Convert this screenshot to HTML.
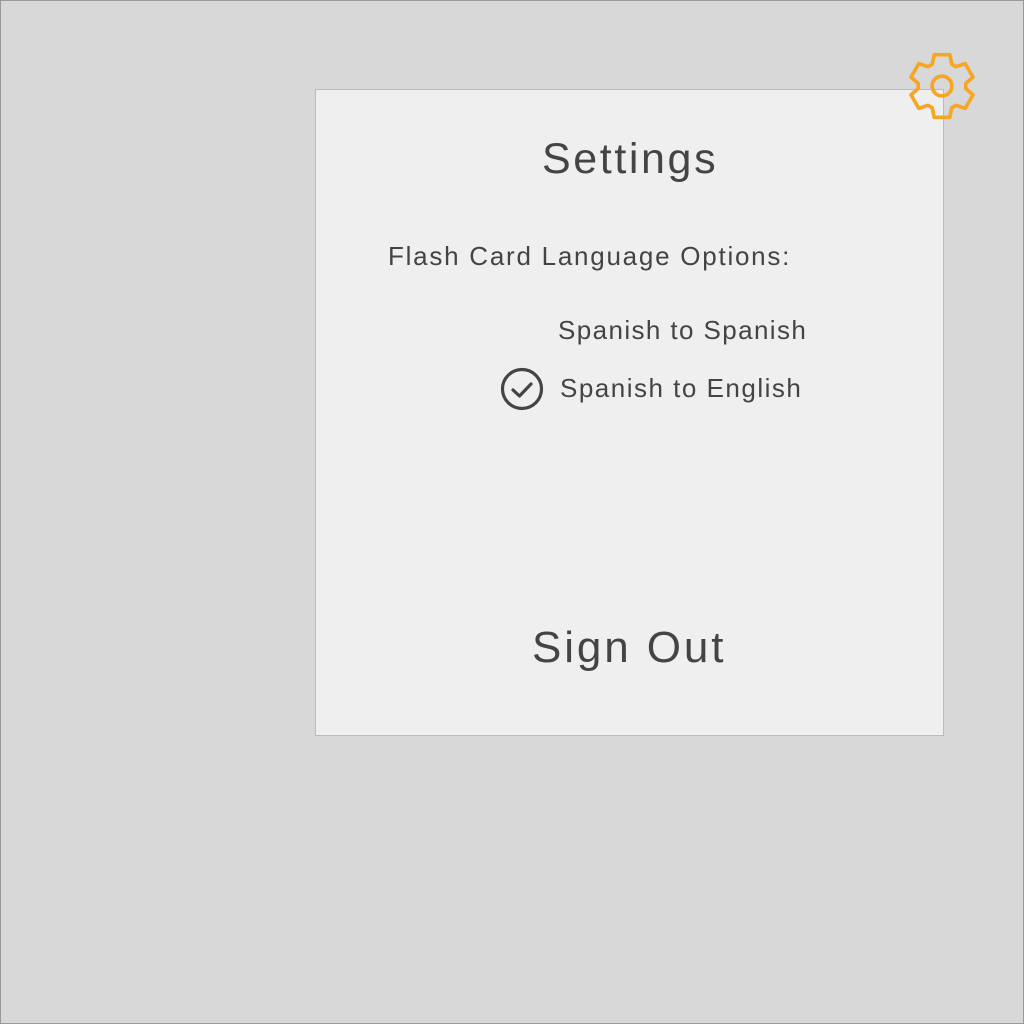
<!DOCTYPE html>
<html><head><style>
body{margin:0;width:1024px;height:1024px;background:#d8d8d8;font-family:"Liberation Sans",sans-serif;color:#444;position:relative;overflow:hidden}
.frame{position:absolute;left:0;top:0;width:1022px;height:1022px;border:1px solid #999}
.panel{position:absolute;left:315px;top:89px;width:627px;height:645px;background:#efefef;border:1px solid #bbb}
.t{position:absolute;white-space:nowrap;line-height:1}
</style></head><body>
<div class="frame"></div>
<div class="panel"></div>
<div class="t" style="left:542px;top:138px;font-size:43px;letter-spacing:2.6px">Settings</div>
<div class="t" style="left:388px;top:243px;font-size:26px;letter-spacing:1.75px">Flash Card Language Options:</div>
<div class="t" style="left:558px;top:317px;font-size:26px;letter-spacing:1.4px">Spanish to Spanish</div>
<div class="t" style="left:560px;top:375px;font-size:26px;letter-spacing:1.5px">Spanish to English</div>
<div class="t" style="left:532px;top:626px;font-size:44px;letter-spacing:2.9px">Sign Out</div>
<svg width="1024" height="1024" style="position:absolute;left:0;top:0">
<circle cx="522" cy="389" r="19.5" fill="none" stroke="#444" stroke-width="3.2"/>
<path d="M513 390 L519.5 396 L531 384" fill="none" stroke="#444" stroke-width="3.2" stroke-linecap="round" stroke-linejoin="round"/>
<g transform="translate(942,86) scale(1.04)" fill="none" stroke="#f5a623" stroke-width="3.5" stroke-linejoin="round">
<polygon points="22.87,2.40 29.80,8.54 22.30,21.53 13.52,18.61 9.35,21.01 7.50,30.08 -7.50,30.08 -9.35,21.01 -13.52,18.61 -22.30,21.53 -29.80,8.54 -22.87,2.40 -22.87,-2.40 -29.80,-8.54 -22.30,-21.53 -13.52,-18.61 -9.35,-21.01 -7.50,-30.08 7.50,-30.08 9.35,-21.01 13.52,-18.61 22.30,-21.53 29.80,-8.54 22.87,-2.40"/>
<circle r="9.5" />
</g>
</svg>
</body></html>
